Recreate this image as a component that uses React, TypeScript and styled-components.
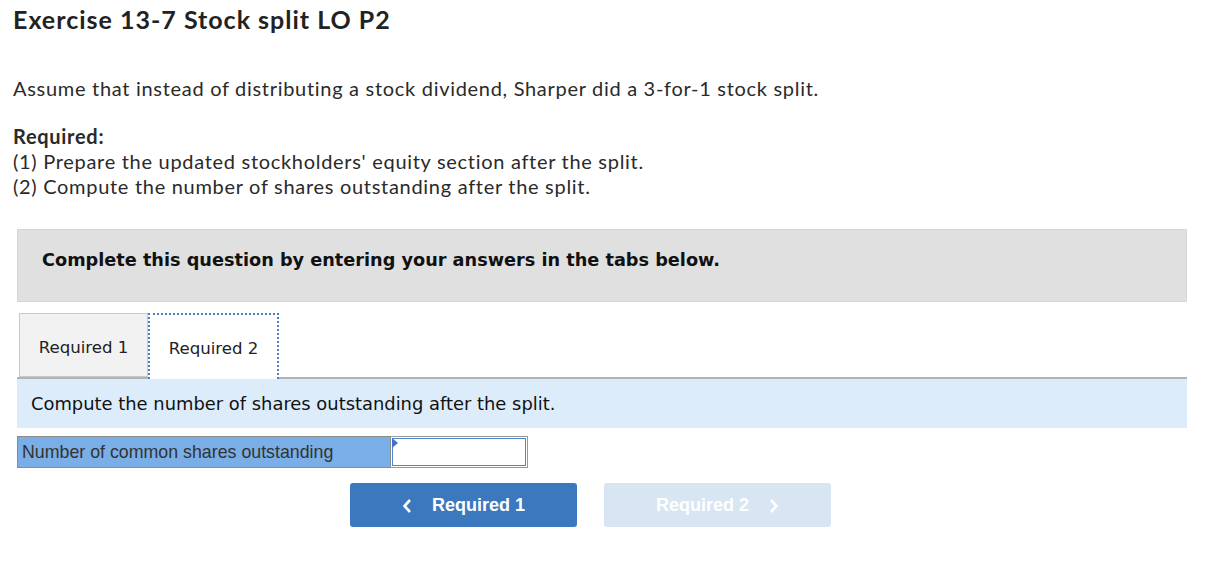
import React from "react";
import styled, { createGlobalStyle } from "styled-components";

const GlobalStyle = createGlobalStyle`
  body {
    margin: 0;
    background: #ffffff;
    font-family: Lato, "Open Sans", sans-serif;
    color: #222222;
  }
`;

const Page = styled.div`
  width: 1232px;
  padding: 4px 0 0 13px;
  box-sizing: border-box;
`;

const Title = styled.h1`
  margin: 0;
  font-family: Lato, sans-serif;
  font-weight: 700;
  font-size: 25px;
  letter-spacing: 1px;
  line-height: 30px;
  color: #222222;
`;

const Intro = styled.p`
  margin: 42px 0 0;
  font-size: 20px;
  letter-spacing: 0.7px;
  line-height: 25px;
  color: #2a2a2a;
`;

const Required = styled.div`
  margin-top: 23px;
  font-size: 20px;
  letter-spacing: 0.7px;
  line-height: 25px;
  color: #2a2a2a;
`;

const RequiredHead = styled.div`
  font-weight: 700;
`;

const Section = styled.div`
  width: 1170px;
  margin: 30px 0 0 4px;
`;

const Banner = styled.div`
  height: 73px;
  background: #e0e0e0;
  border: 1px solid #d6d6d6;
  box-sizing: border-box;
  display: flex;
  align-items: center;
  padding-left: 24px;
  padding-bottom: 12px;
  font-family: "DejaVu Sans", Verdana, sans-serif;
  font-weight: 700;
  font-size: 17.7px;
  color: #111111;
`;

const TabRow = styled.div`
  display: flex;
  margin-top: 11px;
  padding-left: 2px;
  border-bottom: 2px solid #b3b3b3;
  height: 64px;
`;

const Tab = styled.div<{ $active?: boolean }>`
  width: ${(p) => (p.$active ? "131px" : "129px")};
  box-sizing: border-box;
  display: flex;
  align-items: center;
  justify-content: center;
  font-family: "DejaVu Sans", Verdana, sans-serif;
  font-size: 16.6px;
  color: #222222;
  background: ${(p) => (p.$active ? "#ffffff" : "#f2f2f2")};
  border: ${(p) => (p.$active ? "2px dotted #4a7fc8" : "1px solid #c8c8c8")};
  border-bottom: ${(p) => (p.$active ? "none" : "1px solid #c8c8c8")};
  margin-bottom: ${(p) => (p.$active ? "-2px" : "0")};
  padding-top: ${(p) => (p.$active ? "2px" : "4px")};
`;

const Prompt = styled.div`
  height: 49px;
  background: #dcecfa;
  display: flex;
  align-items: center;
  padding-left: 14px;
  font-family: "DejaVu Sans", Verdana, sans-serif;
  font-size: 17.9px;
  color: #111111;
`;

const AnswerRow = styled.div`
  display: flex;
  margin-top: 8px;
  height: 32px;
`;

const AnswerLabel = styled.div`
  width: 374px;
  box-sizing: border-box;
  background: #7aaee6;
  border: 1px solid #8a8a8a;
  display: flex;
  align-items: center;
  padding-left: 4px;
  font-family: "Liberation Sans", Arial, sans-serif;
  font-size: 17.8px;
  color: #333333;
`;

const AnswerInput = styled.div`
  position: relative;
  width: 137px;
  box-sizing: border-box;
  border: 1px solid #999999;
  border-left: none;
  padding: 1px;
  background: #ffffff;
`;

const InputInner = styled.div`
  height: 100%;
  box-sizing: border-box;
  border: 1px solid #4d86d6;
`;

const Marker = styled.div`
  position: absolute;
  left: 1px;
  top: 1px;
  width: 0;
  height: 0;
  border-top: 5px solid transparent;
  border-bottom: 5px solid transparent;
  border-left: 6px solid #3d73c4;
`;

const NavRow = styled.div`
  display: flex;
  gap: 27px;
  margin: 15px 0 0 333px;
`;

const NavButton = styled.div<{ $disabled?: boolean }>`
  width: 227px;
  height: 44px;
  border-radius: 3px;
  box-sizing: border-box;
  display: flex;
  align-items: center;
  justify-content: center;
  gap: 19px;
  font-family: "Liberation Sans", Arial, sans-serif;
  font-weight: 700;
  font-size: 18px;
  color: #ffffff;
  background: ${(p) => (p.$disabled ? "#d8e5f3" : "#3c78be")};
  padding-top: 1px;
`;

const Chevron = ({ dir }: { dir: "left" | "right" }) => (
  <svg width="11" height="16" viewBox="0 0 11 16">
    <path
      d={dir === "left" ? "M8 2 L2.5 8 L8 14" : "M3 2 L8.5 8 L3 14"}
      fill="none"
      stroke="#ffffff"
      strokeWidth="2.6"
    />
  </svg>
);

export default function App() {
  return (
    <>
      <GlobalStyle />
      <Page>
        <Title>Exercise 13-7 Stock split LO P2</Title>
        <Intro>
          Assume that instead of distributing a stock dividend, Sharper did a 3-for-1 stock split.
        </Intro>
        <Required>
          <RequiredHead>Required:</RequiredHead>
          <div>(1) Prepare the updated stockholders' equity section after the split.</div>
          <div>(2) Compute the number of shares outstanding after the split.</div>
        </Required>
        <Section>
          <Banner>Complete this question by entering your answers in the tabs below.</Banner>
          <TabRow>
            <Tab>Required 1</Tab>
            <Tab $active>Required 2</Tab>
          </TabRow>
          <Prompt>Compute the number of shares outstanding after the split.</Prompt>
          <AnswerRow>
            <AnswerLabel>Number of common shares outstanding</AnswerLabel>
            <AnswerInput>
              <InputInner />
              <Marker />
            </AnswerInput>
          </AnswerRow>
          <NavRow>
            <NavButton>
              <Chevron dir="left" />
              Required 1
            </NavButton>
            <NavButton $disabled>
              Required 2
              <Chevron dir="right" />
            </NavButton>
          </NavRow>
        </Section>
      </Page>
    </>
  );
}
